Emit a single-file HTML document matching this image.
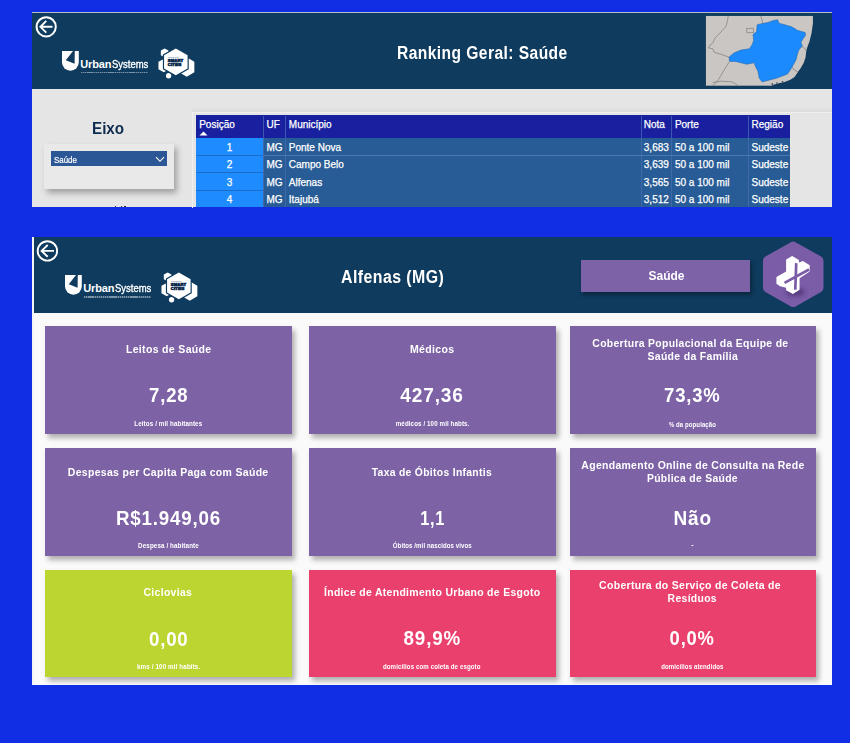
<!DOCTYPE html>
<html><head><meta charset="utf-8">
<style>
*{margin:0;padding:0;box-sizing:border-box}
html,body{width:850px;height:743px;overflow:hidden;background:#112ee4;font-family:"Liberation Sans",sans-serif}
.abs{position:absolute}
#p1{left:32px;top:12px;width:800px;height:195px;background:#e5e5e5;overflow:hidden}
#p1 .hdr{left:0;top:0;width:800px;height:77px;background:#0e3b5e;border-top:1px solid #b9bfc6}
#p2{left:32px;top:237px;width:800px;height:448px;background:#fafafa;overflow:hidden}
#p2 .hdr{left:0;top:0;width:800px;height:76px;background:#0e3b5e}
.title{color:#fff;font-weight:bold;white-space:nowrap}
.cd{position:absolute;box-shadow:3px 4px 5px rgba(0,0,0,0.3)}
.ct{position:absolute;color:#fff;font-weight:bold;white-space:nowrap;text-align:center;transform-origin:50% 50%}
.th,.td{color:#fff;font-size:10px;line-height:12px;white-space:nowrap;-webkit-text-stroke:0.25px #fff}
</style></head><body>

<div id="p1" class="abs">
  <div class="hdr abs"></div>
</div>
<!-- logo1 -->
<svg class="abs" style="left:62px;top:51px" width="17" height="20" viewBox="0 0 17 20">
  <path d="M0,0 H16.8 V11.3 A8.4,8.4 0 0 1 0,11.3 Z" fill="#fff"/>
  <path d="M11,0 L3.8,9.2 L12.6,12.7 L12.8,0 Z" fill="#0e3b5e"/>
</svg>
<div class="abs title" style="left:80.3px;top:59.3px;font-size:11px;line-height:11px;letter-spacing:-0.15px">Urban</div><div class="abs title" style="left:112.3px;top:59.3px;font-size:11px;line-height:11px;font-weight:normal;-webkit-text-stroke:0.35px #fff;transform:scaleX(0.86);transform-origin:0 0">Systems</div>
<div class="abs" style="left:81px;top:71.8px;width:67px;height:1.6px;background:repeating-linear-gradient(90deg,rgba(255,255,255,0.45) 0 1.3px,rgba(255,255,255,0.2) 1.3px 2.1px)"></div>
<svg class="abs" style="left:152px;top:44px" width="50" height="38" viewBox="0 0 850 646">
  <g fill="#fff">
    <polygon points="215,75 280,112 280,190 215,227 150,190 150,112"/>
    <polygon points="200,255 270,295 270,440 200,480 110,430 110,300"/>
    <polygon points="590,225 720,300 720,480 590,555 460,480 460,300"/>
    <circle cx="282" cy="540" r="45"/>
  </g>
  <polygon points="405,55 625,180 625,430 405,555 185,430 185,180" fill="#0e3b5e"/>
  <polygon points="405,78 605,192 605,418 405,532 205,418 205,192" fill="#fff"/>
  <rect x="272" y="222" width="185" height="9" fill="#0e3b5e" opacity="0.5"/>
  <text x="270" y="305" font-family="Liberation Sans" font-weight="bold" font-size="62" fill="#0e2a4e" stroke="#0e2a4e" stroke-width="10" textLength="260" lengthAdjust="spacingAndGlyphs">SMART</text>
  <text x="270" y="375" font-family="Liberation Sans" font-weight="bold" font-size="62" fill="#0e2a4e" stroke="#0e2a4e" stroke-width="10" textLength="230" lengthAdjust="spacingAndGlyphs">CITIES</text>
</svg>
<!-- map -->
<svg class="abs" style="left:700px;top:12px" width="120" height="80" viewBox="0 0 850 566.67">
  <rect x="42" y="28" width="760" height="494" fill="#c9c6c4"/>
  <path d="M800,20 L800,80 L790,150 L775,210 L760,250 L752,280 L748,320 L735,360 L715,395 L690,430 L670,460 L640,480 L600,495 L560,505 L520,515 L500,530 L830,530 L830,20 Z" fill="#0e3b5e"/>
  <g fill="none" stroke="#7f7d7b" stroke-width="5" stroke-linejoin="round">
    <path d="M200,28 L195,60 L185,100 L150,140 L110,180 L90,220 L70,235 L60,255 L90,260 L100,285 L150,300 L205,320"/>
    <path d="M210,350 L190,380 L160,430 L130,480 L90,522"/>
    <path d="M90,500 L150,490 L230,495 L270,522"/>
    <path d="M430,28 L440,60 L445,85"/>
    <path d="M330,117 L378,115 L380,145 L332,147 Z"/>
    <path d="M715,240 L740,255 L752,275"/>
    <path d="M650,385 L665,410 L695,425"/>
  </g>
  <path d="M405,90 L450,80 L480,75 L520,60 L550,55 L560,80 L600,90 L650,105 L690,130 L745,145 L748,165 L730,190 L715,215 L725,240 L700,270 L690,300 L680,340 L660,375 L640,410 L620,440 L580,455 L540,470 L500,480 L440,495 L420,470 L410,420 L390,380 L385,360 L330,370 L290,360 L250,350 L210,350 L205,320 L240,290 L290,270 L350,260 L370,230 L380,200 L375,160 L400,140 Z" fill="#1a8afc" stroke="#2f6aa8" stroke-width="4" stroke-linejoin="round"/>
  <g fill="#333"><circle cx="512" cy="510" r="6"/><circle cx="545" cy="503" r="5"/><circle cx="585" cy="494" r="5"/></g>
</svg>
<!-- Eixo -->
<div class="abs" id="eixo" style="left:92.3px;top:119.5px;font-size:16px;line-height:18px;font-weight:bold;color:#0d2a4f;transform:scaleX(0.95);transform-origin:0 0">Eixo</div>
<div class="abs" style="left:44px;top:144px;width:130px;height:45px;background:#e9e9e9;box-shadow:3px 4px 6px rgba(0,0,0,0.3)"></div>
<div class="abs" style="left:51px;top:151px;width:116px;height:15px;background:#2b5797"></div>
<div class="abs" id="sel" style="left:54.4px;top:154.5px;font-size:9px;line-height:11px;color:#fff;transform:scaleX(0.88);transform-origin:0 0;-webkit-text-stroke:0.2px #fff">Saúde</div>
<svg class="abs" style="left:155px;top:156px" width="10" height="7" viewBox="0 0 10 7"><path d="M1,1.2 L5,5.3 L9,1.2" fill="none" stroke="#fff" stroke-width="1.1"/></svg>
<div class="abs" style="left:191.5px;top:111.5px;width:1px;height:96px;background:#efefef"></div>
<div class="abs" style="left:0;top:0;width:850px;height:207px;overflow:hidden">
<div class="abs" style="left:192px;top:106px;width:640px;height:5.5px;background:linear-gradient(rgba(0,0,0,0),rgba(0,0,0,0.04))"></div><div class="abs" style="left:192px;top:111.5px;width:640px;height:1px;background:#efefef"></div><div class="abs" style="left:196px;top:114.8px;width:594px;height:23.2px;background:#1820a0"></div>
<div class="abs" style="left:196px;top:138px;width:67px;height:80px;background:#1e8cff"></div>
<div class="abs" style="left:263px;top:138px;width:527px;height:80px;background:#285c96"></div>
<div class="abs" style="left:262.5px;top:115.5px;width:1px;height:100px;background:#4a6fb4;opacity:0.7"></div>
<div class="abs" style="left:285.0px;top:115.5px;width:1px;height:100px;background:#4a6fb4;opacity:0.7"></div>
<div class="abs" style="left:640.5px;top:115.5px;width:1px;height:100px;background:#4a6fb4;opacity:0.7"></div>
<div class="abs" style="left:670.5px;top:115.5px;width:1px;height:100px;background:#4a6fb4;opacity:0.7"></div>
<div class="abs" style="left:747.5px;top:115.5px;width:1px;height:100px;background:#4a6fb4;opacity:0.7"></div>
<div class="abs" style="left:196px;top:154.8px;width:67px;height:1px;background:#1a6cc8"></div>
<div class="abs" style="left:196px;top:172.2px;width:67px;height:1px;background:#1a6cc8"></div>
<div class="abs" style="left:196px;top:189.7px;width:67px;height:1px;background:#1a6cc8"></div>
<div class="abs" style="left:263px;top:154.8px;width:527px;height:1px;background:#4a78b4"></div>
<div class="abs th" style="left:199.2px;top:118.5px">Posição</div>
<div class="abs th" style="left:266.5px;top:118.5px">UF</div>
<div class="abs th" style="left:288.8px;top:118.5px">Município</div>
<div class="abs th" style="left:643.8px;top:118.5px">Nota</div>
<div class="abs th" style="left:674.9px;top:118.5px">Porte</div>
<div class="abs th" style="left:751.5px;top:118.5px">Região</div>
<svg class="abs" style="left:199px;top:130.5px" width="9" height="5" viewBox="0 0 9 5"><polygon points="0.5,4.5 4.5,0.5 8.5,4.5" fill="#fff"/></svg>
<div class="abs td" style="left:196px;width:67px;text-align:center;top:141.6px">1</div>
<div class="abs td" style="left:266.5px;top:141.6px">MG</div>
<div class="abs td" style="left:288.8px;top:141.6px">Ponte Nova</div>
<div class="abs td" style="left:643.8px;top:141.6px">3,683</div>
<div class="abs td" style="left:674.9px;top:141.6px">50 a 100 mil</div>
<div class="abs td" style="left:751.5px;top:141.6px">Sudeste</div>
<div class="abs td" style="left:196px;width:67px;text-align:center;top:159.2px">2</div>
<div class="abs td" style="left:266.5px;top:159.2px">MG</div>
<div class="abs td" style="left:288.8px;top:159.2px">Campo Belo</div>
<div class="abs td" style="left:643.8px;top:159.2px">3,639</div>
<div class="abs td" style="left:674.9px;top:159.2px">50 a 100 mil</div>
<div class="abs td" style="left:751.5px;top:159.2px">Sudeste</div>
<div class="abs td" style="left:196px;width:67px;text-align:center;top:176.8px">3</div>
<div class="abs td" style="left:266.5px;top:176.8px">MG</div>
<div class="abs td" style="left:288.8px;top:176.8px">Alfenas</div>
<div class="abs td" style="left:643.8px;top:176.8px">3,565</div>
<div class="abs td" style="left:674.9px;top:176.8px">50 a 100 mil</div>
<div class="abs td" style="left:751.5px;top:176.8px">Sudeste</div>
<div class="abs td" style="left:196px;width:67px;text-align:center;top:194.4px">4</div>
<div class="abs td" style="left:266.5px;top:194.4px">MG</div>
<div class="abs td" style="left:288.8px;top:194.4px">Itajubá</div>
<div class="abs td" style="left:643.8px;top:194.4px">3,512</div>
<div class="abs td" style="left:674.9px;top:194.4px">50 a 100 mil</div>
<div class="abs td" style="left:751.5px;top:194.4px">Sudeste</div>
</div>
<div class="abs" style="left:114.5px;top:205.5px;width:1.5px;height:1.5px;background:#333"></div><div class="abs" style="left:120.5px;top:205.5px;width:1.5px;height:1.5px;background:#333"></div><div class="abs" style="left:124px;top:205.5px;width:1.5px;height:1.5px;background:#333"></div>
<!-- top header items -->
<svg class="abs" style="left:32px;top:12px" width="800" height="77" viewBox="0 0 800 77">
  <circle cx="14.2" cy="14.8" r="9.6" fill="none" stroke="#fff" stroke-width="2"/>
  <path d="M20.5,14.8 H8.2 M14.3,8.9 L8.4,14.8 L14.3,20.7" fill="none" stroke="#fff" stroke-width="1.9"/>
</svg>
<div class="abs title" id="t1" style="left:396.5px;top:43px;font-size:18px;line-height:20px;letter-spacing:0.5px;transform:scaleX(0.866);transform-origin:0 0">Ranking Geral: Saúde</div>


<div id="p2" class="abs">
  <div class="hdr abs"></div>
</div>
<div class="abs" style="left:32px;top:237px;width:2px;height:448px;background:#f4f4f4"></div>
<svg class="abs" style="left:32px;top:237px" width="60" height="40" viewBox="0 0 60 40">
  <circle cx="15.4" cy="13.9" r="9.7" fill="none" stroke="#fff" stroke-width="1.9"/>
  <path d="M22,13.9 H9.4 M15.7,8 L9.6,13.9 L15.7,19.8" fill="none" stroke="#fff" stroke-width="1.9"/>
</svg>
<svg class="abs" style="left:64.8px;top:275px" width="17" height="20" viewBox="0 0 17 20">
  <path d="M0,0 H16.8 V11.3 A8.4,8.4 0 0 1 0,11.3 Z" fill="#fff"/>
  <path d="M11,0 L3.8,9.2 L12.6,12.7 L12.8,0 Z" fill="#0e3b5e"/>
</svg>
<div class="abs title" style="left:83.3px;top:283.3px;font-size:11px;line-height:11px;letter-spacing:-0.15px">Urban</div><div class="abs title" style="left:115.3px;top:283.3px;font-size:11px;line-height:11px;font-weight:normal;-webkit-text-stroke:0.35px #fff;transform:scaleX(0.86);transform-origin:0 0">Systems</div>
<div class="abs" style="left:84px;top:296.3px;width:67px;height:1.6px;background:repeating-linear-gradient(90deg,rgba(255,255,255,0.45) 0 1.3px,rgba(255,255,255,0.2) 1.3px 2.1px)"></div>
<svg class="abs" style="left:155px;top:268px" width="50" height="38" viewBox="0 0 850 646">
  <g fill="#fff">
    <polygon points="215,75 280,112 280,190 215,227 150,190 150,112"/>
    <polygon points="200,255 270,295 270,440 200,480 110,430 110,300"/>
    <polygon points="590,225 720,300 720,480 590,555 460,480 460,300"/>
    <circle cx="282" cy="540" r="45"/>
  </g>
  <polygon points="405,55 625,180 625,430 405,555 185,430 185,180" fill="#0e3b5e"/>
  <polygon points="405,78 605,192 605,418 405,532 205,418 205,192" fill="#fff"/>
  <rect x="272" y="222" width="185" height="9" fill="#0e3b5e" opacity="0.5"/>
  <text x="270" y="305" font-family="Liberation Sans" font-weight="bold" font-size="62" fill="#0e2a4e" stroke="#0e2a4e" stroke-width="10" textLength="260" lengthAdjust="spacingAndGlyphs">SMART</text>
  <text x="270" y="375" font-family="Liberation Sans" font-weight="bold" font-size="62" fill="#0e2a4e" stroke="#0e2a4e" stroke-width="10" textLength="230" lengthAdjust="spacingAndGlyphs">CITIES</text>
</svg>
<div class="abs title" id="t2" style="left:340.5px;top:267px;font-size:18px;line-height:20px;letter-spacing:0.5px;transform:scaleX(0.882);transform-origin:0 0">Alfenas (MG)</div>
<div class="abs" style="left:581px;top:259.5px;width:169px;height:32.5px;background:#7e62a8;box-shadow:2px 3px 4px rgba(0,0,0,0.35)"></div>
<div class="abs title" id="sbtn" style="left:581.6px;top:268.6px;width:169px;text-align:center;font-size:12.8px;line-height:14px;transform:scaleX(0.94)">Saúde</div>
<svg class="abs" style="left:755px;top:235px" width="80" height="80" viewBox="0 0 743 743">
  <defs><filter id="sh" x="-50%" y="-50%" width="200%" height="200%"><feGaussianBlur stdDeviation="20"/></filter></defs>
  <path d="M355,105 L592,238 L592,492 L355,625 L118,492 L118,238 Z" fill="#7b5ca7" stroke="#7b5ca7" stroke-width="88" stroke-linejoin="round"/>
  <ellipse cx="375" cy="530" rx="90" ry="38" fill="#3b2566" opacity="0.6" filter="url(#sh)"/>
  <polygon fill="#fff" points="289,227 345,195 408,233 408,255 445,242 508,280 508,339 414,402 414,508 352,548 289,514 289,489 233,477 199,452 199,389 289,339"/>
  <path d="M383,261 L374,508 M274,445 L502,320" stroke="#7b5ca7" stroke-width="25" fill="none"/>
</svg>


<!-- cards start -->
<div class="cd" style="left:45px;top:326px;width:246.5px;height:108px;background:#7d63a6"></div>
<div class="cd" style="left:309px;top:326px;width:246.5px;height:108px;background:#7d63a6"></div>
<div class="cd" style="left:569.5px;top:326px;width:246.0px;height:108px;background:#7d63a6"></div>
<div class="cd" style="left:45px;top:448px;width:246.5px;height:107.5px;background:#7d63a6"></div>
<div class="cd" style="left:309px;top:448px;width:246.5px;height:107.5px;background:#7d63a6"></div>
<div class="cd" style="left:569.5px;top:448px;width:246.0px;height:107.5px;background:#7d63a6"></div>
<div class="cd" style="left:45px;top:569.5px;width:246.5px;height:107.5px;background:#bcd530"></div>
<div class="cd" style="left:309px;top:569.5px;width:246.5px;height:107.5px;background:#ea406e"></div>
<div class="cd" style="left:569.5px;top:569.5px;width:246.0px;height:107.5px;background:#ea406e"></div>
<div class="ct" style="left:121.53px;top:343.67px;width:93.44px;font-size:11.5px;line-height:11.5px;letter-spacing:0.35px;transform:scaleX(0.9156)">Leitos de Saúde</div>
<div class="ct" style="left:146.50px;top:385.05px;width:43.50px;font-size:20.5px;line-height:20.5px;letter-spacing:0.9px;transform:scaleX(0.9034)">7,28</div>
<div class="ct" style="left:132.97px;top:421.30px;width:70.56px;font-size:6.5px;line-height:6.5px;letter-spacing:0.1px;transform:scaleX(0.9637)">Leitos / mil habitantes</div>
<div class="ct" style="left:408.01px;top:343.67px;width:48.47px;font-size:11.5px;line-height:11.5px;letter-spacing:0.35px;transform:scaleX(0.9171)">Médicos</div>
<div class="ct" style="left:398.19px;top:385.05px;width:68.11px;font-size:20.5px;line-height:20.5px;letter-spacing:0.9px;transform:scaleX(0.9308)">427,36</div>
<div class="ct" style="left:393.65px;top:421.30px;width:77.19px;font-size:6.5px;line-height:6.5px;letter-spacing:0.1px;transform:scaleX(0.9548)">médicos / 100 mil habts.</div>
<div class="ct" style="left:581.74px;top:337.67px;width:216.73px;font-size:11.5px;line-height:11.5px;letter-spacing:0.35px;transform:scaleX(0.9050)">Cobertura Populacional da Equipe de</div>
<div class="ct" style="left:642.72px;top:350.67px;width:99.56px;font-size:11.5px;line-height:11.5px;letter-spacing:0.35px;transform:scaleX(0.9105)">Saúde da Família</div>
<div class="ct" style="left:661.18px;top:385.35px;width:62.64px;font-size:20.5px;line-height:20.5px;letter-spacing:0.9px;transform:scaleX(0.9036)">73,3%</div>
<div class="ct" style="left:667.05px;top:421.50px;width:50.89px;font-size:6.5px;line-height:6.5px;letter-spacing:0.1px;transform:scaleX(0.9255)">% da população</div>
<div class="ct" style="left:58.11px;top:466.67px;width:220.27px;font-size:11.5px;line-height:11.5px;letter-spacing:0.35px;transform:scaleX(0.9114)">Despesas per Capita Paga com Saúde</div>
<div class="ct" style="left:110.74px;top:507.65px;width:115.02px;font-size:20.5px;line-height:20.5px;letter-spacing:0.9px;transform:scaleX(0.9146)">R$1.949,06</div>
<div class="ct" style="left:136.78px;top:542.50px;width:62.95px;font-size:6.5px;line-height:6.5px;letter-spacing:0.1px;transform:scaleX(0.9643)">Despesa / habitante</div>
<div class="ct" style="left:365.39px;top:466.67px;width:133.72px;font-size:11.5px;line-height:11.5px;letter-spacing:0.35px;transform:scaleX(0.9000)">Taxa de Óbitos Infantis</div>
<div class="ct" style="left:416.65px;top:507.65px;width:31.20px;font-size:20.5px;line-height:20.5px;letter-spacing:0.9px;transform:scaleX(0.7981)">1,1</div>
<div class="ct" style="left:389.94px;top:542.50px;width:84.61px;font-size:6.5px;line-height:6.5px;letter-spacing:0.1px;transform:scaleX(0.9349)">Óbitos /mil nascidos vivos</div>
<div class="ct" style="left:569.56px;top:459.77px;width:245.89px;font-size:11.5px;line-height:11.5px;letter-spacing:0.35px;transform:scaleX(0.9079)">Agendamento Online de Consulta na Rede</div>
<div class="ct" style="left:642.09px;top:472.77px;width:100.83px;font-size:11.5px;line-height:11.5px;letter-spacing:0.35px;transform:scaleX(0.9030)">Pública de Saúde</div>
<div class="ct" style="left:671.78px;top:508.05px;width:41.44px;font-size:20.5px;line-height:20.5px;letter-spacing:0.9px;transform:scaleX(0.9291)">Não</div>
<div class="ct" style="left:691.37px;top:541.50px;width:2.27px;font-size:6.5px;line-height:6.5px;letter-spacing:0.1px;transform:scaleX(1.0000)">-</div>
<div class="ct" style="left:141.42px;top:587.47px;width:53.66px;font-size:11.5px;line-height:11.5px;letter-spacing:0.35px;transform:scaleX(0.9066)">Ciclovias</div>
<div class="ct" style="left:146.50px;top:629.05px;width:43.50px;font-size:20.5px;line-height:20.5px;letter-spacing:0.9px;transform:scaleX(0.9126)">0,00</div>
<div class="ct" style="left:135.59px;top:663.80px;width:65.33px;font-size:6.5px;line-height:6.5px;letter-spacing:0.1px;transform:scaleX(0.9689)">kms / 100 mil habits.</div>
<div class="ct" style="left:313.04px;top:587.07px;width:238.42px;font-size:11.5px;line-height:11.5px;letter-spacing:0.35px;transform:scaleX(0.9079)">Índice de Atendimento Urbano de Esgoto</div>
<div class="ct" style="left:400.93px;top:628.45px;width:62.64px;font-size:20.5px;line-height:20.5px;letter-spacing:0.9px;transform:scaleX(0.9179)">89,9%</div>
<div class="ct" style="left:380.49px;top:663.70px;width:103.52px;font-size:6.5px;line-height:6.5px;letter-spacing:0.1px;transform:scaleX(0.9438)">domicílios com coleta de esgoto</div>
<div class="ct" style="left:590.06px;top:580.37px;width:200.08px;font-size:11.5px;line-height:11.5px;letter-spacing:0.35px;transform:scaleX(0.9089)">Cobertura do Serviço de Coleta de</div>
<div class="ct" style="left:665.22px;top:593.37px;width:54.56px;font-size:11.5px;line-height:11.5px;letter-spacing:0.35px;transform:scaleX(0.9045)">Resíduos</div>
<div class="ct" style="left:667.34px;top:628.35px;width:50.33px;font-size:20.5px;line-height:20.5px;letter-spacing:0.9px;transform:scaleX(0.8961)">0,0%</div>
<div class="ct" style="left:659.17px;top:663.50px;width:66.66px;font-size:6.5px;line-height:6.5px;letter-spacing:0.1px;transform:scaleX(0.9361)">domicílios atendidos</div>
<!-- cards end -->
</body></html>
